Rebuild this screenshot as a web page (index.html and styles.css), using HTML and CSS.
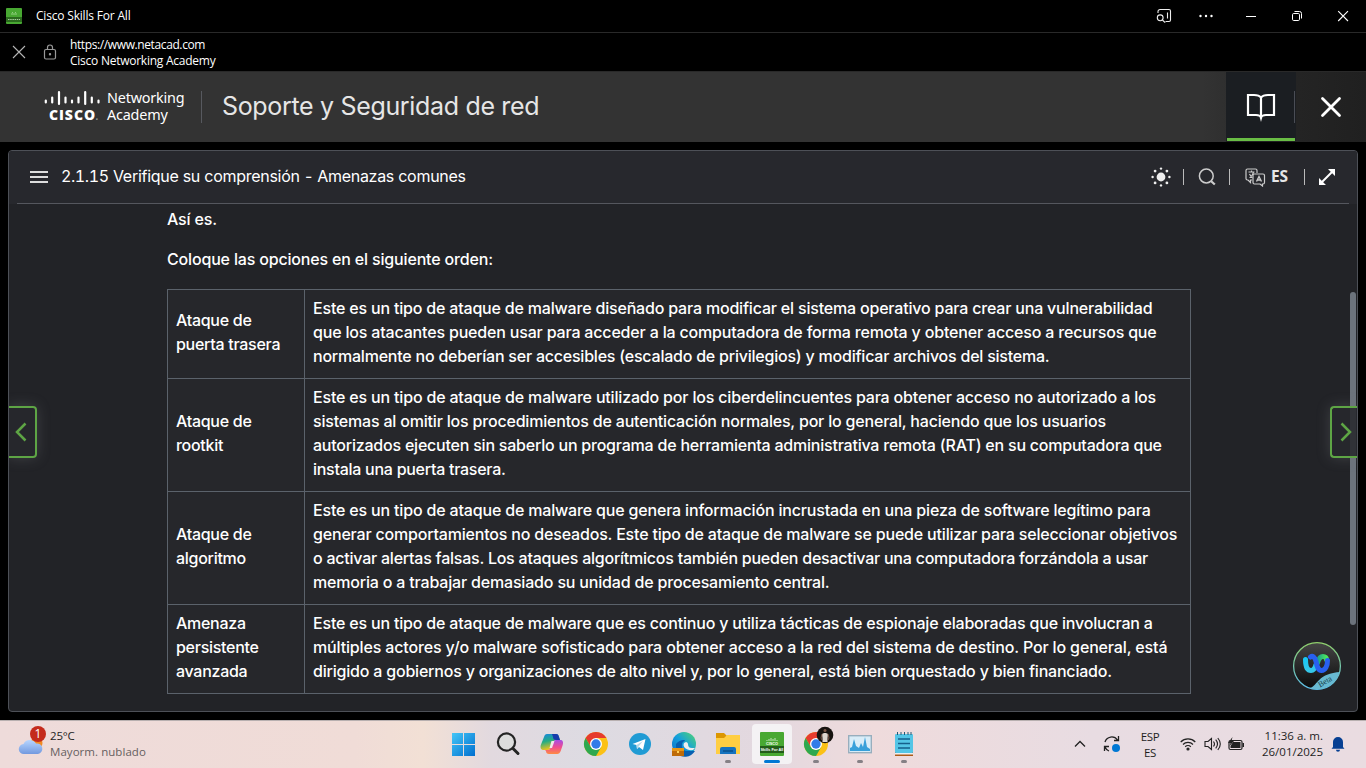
FILE: index.html
```html
<!DOCTYPE html>
<html lang="es">
<head>
<meta charset="utf-8">
<title>Cisco Skills For All</title>
<link rel="stylesheet" href="styles.css">
</head>
<body>
<header class="titlebar">
  <svg class="app-icon" width="16" height="16" viewBox="0 0 16 16"><rect width="16" height="16" rx="1" fill="#48a832"/><path d="M0 9h16v5H0z" fill="#2b6b1e"/><path d="M2 11.500h12" stroke="#a9cda0" stroke-dasharray="1.500 .7"/><path d="M5 6h6M6 4.500h1M9 4.500h1" stroke="#91ce81"/></svg>
  <span class="app-name">Cisco Skills For All</span>
  <div class="window-controls">
    <svg width="16" height="16" viewBox="0 0 16 16" fill="none" stroke="#eee" stroke-width="1.100"><path d="M2 5V3.500A2 2 0 0 1 4 1.500h9A1.500 1.500 0 0 1 14.500 3v9A1.500 1.500 0 0 1 13 13.500H9.500M11.500 4.500v6"/><circle cx="4.200" cy="9.800" r="2.900"/><path d="M6.400 12l2.800 2.700"/></svg>
    <svg width="16" height="16" viewBox="0 0 16 16" fill="#fff"><circle cx="2.500" cy="8" r="1.200"/><circle cx="8" cy="8" r="1.200"/><circle cx="13.500" cy="8" r="1.200"/></svg>
    <svg width="16" height="16" viewBox="0 0 16 16" stroke="#fff"><path d="M3 8.500h10"/></svg>
    <svg width="16" height="16" viewBox="0 0 16 16" fill="none" stroke="#fff"><rect x="3.500" y="5.500" width="7" height="7" rx="1.200"/><path d="M5.500 3.500h5a2 2 0 0 1 2 2v5"/></svg>
    <svg width="16" height="16" viewBox="0 0 16 16" stroke="#fff" stroke-width="1.100"><path d="M3.200 3.200l9.800 9.800M13 3.200L3.200 13"/></svg>
  </div>
</header>
<div class="addressbar">
  <svg width="14" height="14" viewBox="0 0 14 14" stroke="#b5b5b5" stroke-width="1.100"><path d="M1 1l12 12M13 1L1 13"/></svg>
  <svg class="lock" width="14" height="16" viewBox="0 0 14 16" fill="none" stroke="#999" stroke-width="1.200"><rect x="1.500" y="5.500" width="11" height="9.500" rx="1.500"/><path d="M4.500 5.500V3.500a2.500 2.500 0 0 1 5 0v2"/><circle cx="7" cy="10.200" r=".6" fill="#bbb"/></svg>
  <div class="address"><div class="url">https://www.netacad.com</div><div class="site">Cisco Networking Academy</div></div>
</div>
<div class="course-header">
  <div class="brand">
    <div class="cisco">
      <svg width="56" height="16" viewBox="0 0 56 16" stroke="#fff" stroke-width="2.200" stroke-linecap="round"><path d="M1.800 9.500v2M8.200 6.500v5M15 1v12M21.500 6.500v5M28 9.500v2M34.500 6.500v5M41.200 1v12M47.800 6.500v5M54.500 9.500v2"/></svg>
      <div class="cisco-word">CISCO<i>.</i></div>
    </div>
    <div class="academy"><div>Networking</div><div>Academy</div></div>
  </div>
  <div class="course-title">Soporte y Seguridad de red</div>
  <div class="book-tab"><svg width="30" height="28" viewBox="0 0 30 28" fill="none" stroke="#fff" stroke-width="2.200"><path d="M15 4.500C13.500 2.500 11 2 8 2H2v20h8c3 0 4.500 1 5 2.800.5-1.800 2-2.800 5-2.800h8V2h-6c-3 0-5.500.5-7 2.500zM15 4v21.500"/></svg></div>
  <div class="close-tab"><svg width="22" height="22" viewBox="0 0 22 22" stroke="#fff" stroke-width="2.800" stroke-linecap="round"><path d="M2.500 2.500l17 17M19.500 2.500l-17 17"/></svg></div>
</div>
<main class="stage">
  <section class="panel">
    <div class="toolbar">
      <div class="toolbar-row">
      <div class="menu"><i></i><i></i><i></i></div>
      <h1><span class="section-number">2.1.15</span> Verifique su comprensión <span class="dash">-</span> Amenazas comunes</h1>
      <div class="tools">
        <svg width="20" height="20" viewBox="0 0 20 20" fill="#eee"><circle cx="10" cy="10" r="4.400"/><circle cx="10" cy="1.600" r="1.200"/><circle cx="10" cy="18.400" r="1.200"/><circle cx="1.600" cy="10" r="1.200"/><circle cx="18.400" cy="10" r="1.200"/><circle cx="4.100" cy="4.100" r="1.400"/><circle cx="15.900" cy="4.100" r="1.400"/><circle cx="4.100" cy="15.900" r="1.400"/><circle cx="15.900" cy="15.900" r="1.400"/></svg>
        <i class="sep sep-a"></i>
        <svg class="search" width="18" height="18" viewBox="0 0 18 18" fill="none" stroke="#ccc" stroke-width="1.500"><circle cx="8.300" cy="8" r="6.900"/><path d="M13.200 13.200l3.600 3.300" stroke-width="2.200"/></svg>
        <i class="sep sep-b"></i>
        <svg class="translate" width="21" height="19" viewBox="0 0 21 19" fill="none" stroke="#ccc" stroke-width="1.200"><path d="M7 12H5.500v2.500L3 12H2.500A1.500 1.500 0 0 1 1 10.500v-8A1.500 1.500 0 0 1 2.500 1h8A1.500 1.500 0 0 1 12 2.500V5"/><path d="M3.500 4h6M6.500 2.500V4M4.500 9.500c2-1 3.500-3 4-5.500M4.500 6c1 2 2 3 3 3.500"/><path d="M9 6h9a1.500 1.500 0 0 1 1.500 1.500v7A1.500 1.500 0 0 1 18 16h-.5v2L15 16H9.500A1.500 1.500 0 0 1 8 14.500V7.200A1.200 1.200 0 0 1 9 6z"/><path d="M11.500 13.500l2.500-5 2.500 5M12.500 12h3" stroke-width="1.400"/></svg>
        <b class="lang">ES</b>
        <i class="sep sep-c"></i>
        <svg class="expand" width="18" height="18" viewBox="0 0 18 18"><path d="M3.500 14.500l11-11" stroke="#fff" stroke-width="2"/><path d="M10 1h7v7zM1 10v7h7z" fill="#fff"/></svg>
      </div>
      </div>
    </div>
    <div class="content">
      <p class="feedback">Así es.</p>
      <p class="instruction">Coloque las opciones en el siguiente orden:</p>
      <table>
        <tr><th>Ataque de<br>puerta trasera</th><td><span class="l1">Este es un tipo de ataque de malware diseñado para modificar el sistema operativo para crear una vulnerabilidad</span><br><span class="l2">que los atacantes pueden usar para acceder a la computadora de forma remota y obtener acceso a recursos que</span><br><span class="l3">normalmente no deberían ser accesibles (escalado de privilegios) y modificar archivos del sistema.</span></td></tr>
        <tr><th>Ataque de<br>rootkit</th><td><span class="l4">Este es un tipo de ataque de malware utilizado por los ciberdelincuentes para obtener acceso no autorizado a los</span><br><span class="l5">sistemas al omitir los procedimientos de autenticación normales, por lo general, haciendo que los usuarios</span><br><span class="l6">autorizados ejecuten sin saberlo un programa de herramienta administrativa remota (RAT) en su computadora que</span><br><span class="l7">instala una puerta trasera.</span></td></tr>
        <tr><th>Ataque de<br>algoritmo</th><td><span class="l8">Este es un tipo de ataque de malware que genera información incrustada en una pieza de software legítimo para</span><br><span class="l9">generar comportamientos no deseados. Este tipo de ataque de malware se puede utilizar para seleccionar objetivos</span><br><span class="l10">o activar alertas falsas. Los ataques algorítmicos también pueden desactivar una computadora forzándola a usar</span><br><span class="l11">memoria o a trabajar demasiado su unidad de procesamiento central.</span></td></tr>
        <tr><th>Amenaza<br>persistente<br>avanzada</th><td><span class="l12">Este es un tipo de ataque de malware que es continuo y utiliza tácticas de espionaje elaboradas que involucran a</span><br><span class="l13">múltiples actores y/o malware sofisticado para obtener acceso a la red del sistema de destino. Por lo general, está</span><br><span class="l14">dirigido a gobiernos y organizaciones de alto nivel y, por lo general, está bien orquestado y bien financiado.</span></td></tr>
      </table>
    </div>
    <div class="scroll-thumb"></div>
    <div class="nav prev"><svg width="12" height="20" viewBox="0 0 12 20"><path d="M10.500 1.500L2 10l8.500 8.500"/></svg></div>
    <div class="nav next"><svg width="12" height="20" viewBox="0 0 12 20"><path d="M1.500 1.500L10 10l-8.500 8.500"/></svg></div>
    <svg class="assistant" width="48" height="48" viewBox="0 0 48 48">
      <defs>
        <linearGradient id="ring" x2="0" y2="1"><stop offset="0" stop-color="#8fcf6a"/><stop offset="1" stop-color="#5cbdea"/></linearGradient>
        <linearGradient id="disc" x2="0" y2="1"><stop offset="0" stop-color="#454545"/><stop offset="1" stop-color="#0b0b0b"/></linearGradient>
        <linearGradient id="wl" x2="0" y2="1"><stop offset="0" stop-color="#18c8f5"/><stop offset="1" stop-color="#35c7e8"/></linearGradient>
        <linearGradient id="wr" x2="1" y2="0"><stop offset="0" stop-color="#17a08e"/><stop offset="1" stop-color="#4de65c"/></linearGradient>
        <clipPath id="round"><circle cx="24" cy="24" r="23.500"/></clipPath>
      </defs>
      <circle cx="24" cy="24" r="23.400" fill="url(#disc)" stroke="url(#ring)" stroke-width="1.300"/>
      <g fill="none" stroke-width="5" stroke-linecap="round"><path d="M24.500 21c1-4 2.500-6.500 5.500-6.500 2.200 0 3.500 1.500 3.500 3" stroke="url(#wr)"/><path d="M12.500 17.500c0 7 2 11 5.500 11 2.500 0 4-2 5-6" stroke="url(#wl)"/><path d="M17.500 15c2-1.500 4.500 0 5.500 4.500 1 5 2 9 5.500 9 4 0 6-5 6-10" stroke="#2860f0"/></g>
      <g clip-path="url(#round)"><path d="M17 46C25 44 24 31 48 30v18H17z" fill="#68b9d1"/></g>
      <text class="beta" x="27" y="45.500" transform="rotate(-30 27 45.500)">Beta</text>
    </svg>
  </section>
</main>
<footer class="taskbar">
  <div class="weather">
    <svg width="30" height="32" viewBox="0 0 30 32"><defs><linearGradient id="cloud" x2="0" y2="1"><stop offset="0" stop-color="#b8d6ff"/><stop offset="1" stop-color="#7299df"/></linearGradient></defs><circle cx="18.500" cy="17" r="6" fill="#f18924"/><path d="M6 28a5 5 0 0 1-.5-10A7 7 0 0 1 18 17.500 5.300 5.300 0 0 1 20 28z" fill="url(#cloud)"/><circle cx="20" cy="8" r="8" fill="#c42b1c"/><text class="count" x="20" y="12.300" text-anchor="middle">1</text></svg>
    <div><div class="temp">25°C</div><div class="sky">Mayorm. nublado</div></div>
  </div>
  <div class="apps">
    <div class="app"><svg width="24" height="24" viewBox="0 0 24 24"><defs><linearGradient id="win" x2="1" y2="1"><stop stop-color="#44c6f7"/><stop offset="1" stop-color="#006fcf"/></linearGradient></defs><path d="M0 1h11v11H0zM12 1h11v11H12zM0 13h11v11H0zM12 13h11v11H12z" fill="url(#win)"/></svg></div>
    <div class="app"><svg width="24" height="24" viewBox="0 0 24 24" fill="#ddd" stroke="#242424"><circle cx="10.500" cy="10" r="8.600" stroke-width="2.200"/><path d="M17 16.500l5 5" stroke-width="3" stroke-linecap="round"/></svg></div>
    <div class="app"><svg width="24" height="24" viewBox="0 0 24 24"><defs><linearGradient id="cpa" x2=".3" y2="1"><stop stop-color="#1684e5"/><stop offset=".5" stop-color="#25ac83"/><stop offset="1" stop-color="#f1c21b"/></linearGradient><linearGradient id="cpb" x2="0" y2="1"><stop stop-color="#a54de6"/><stop offset=".5" stop-color="#ef4b91"/><stop offset="1" stop-color="#ff8b42"/></linearGradient></defs><path d="M7 2h9c2 0 2.500 1 3 3l1 3h-5L11 15c-.8 2-1.500 3-3.500 3H4c-3 0-4-2-3.200-5L4 5C4.500 3 5.500 2 7 2z" fill="url(#cpa)"/><path d="M12 2h4c2 0 2.500 1 3 3l1 3h-4c-2 0-3-1-3-3z" fill="#173cac"/><path d="M16 8h4c3 0 3.500 2 2.700 5l-2 6c-.8 2-1.800 3-3.500 3H9c-2 0-3-1-3-3l-1-1h2.500c2 0 2.700-1 3.500-3l2.500-5c.5-1.300 1-2 2.500-2z" fill="url(#cpb)"/><path d="M11.500 9h3L12 16H9.500z" fill="#efe7e9"/></svg></div>
    <div class="app"><svg width="24" height="24" viewBox="0 0 24 24"><circle cx="12" cy="12" r="12" fill="#fbc116"/><path d="M1.600 6A12 12 0 0 1 22.400 6H12L6.800 15z" fill="#e63b2e"/><path d="M1.600 6A12 12 0 0 0 12 24l5.200-9L12 18 6.800 15z" fill="#2da84f"/><circle cx="12" cy="12" r="6" fill="#fff"/><circle cx="12" cy="12" r="4.700" fill="#327be8"/></svg></div>
    <div class="app"><svg width="24" height="24" viewBox="0 0 24 24"><circle cx="12" cy="12" r="11" fill="#209bd4"/><path d="M4.500 12l13-5-2.500 11-4-3-2 2-.5-4z" fill="#fff"/><path d="M8.500 13l6.500-4-4 5-2 3z" fill="#b7d8e8"/></svg></div>
    <div class="app"><svg width="24" height="24" viewBox="0 0 24 24"><defs><linearGradient id="edge" y1="1" x2="1" y2="0"><stop stop-color="#0868c4"/><stop offset=".5" stop-color="#149fdd"/><stop offset="1" stop-color="#55d86b"/></linearGradient></defs><circle cx="12" cy="12" r="12" fill="url(#edge)"/><path d="M13 9c-5 1-4 10 2 10h8A12 12 0 0 1 4 21V12c3-4 9-5 9-3z" fill="#075fb0"/><path d="M14 10c4 1 0 6 6 6h3l-2 2c-6 1-11-3-9-7z" fill="#eee"/><path d="M0 16h12v8H0z" fill="#be6b09"/><path d="M0 16h12v3H0z" fill="#e59619"/><rect x="5" y="19" width="2" height="2" fill="#ffd35b"/></svg></div>
    <div class="app running"><svg width="24" height="24" viewBox="0 0 24 24"><path d="M0 1h8l3 3-2 3H0z" fill="#dc9600"/><path d="M0 6h8l3-3h13v19H0z" fill="#ffce42"/><path d="M4 22v-5q0-2 2-2h12q2 0 2 2v5z" fill="#1673bf"/><path d="M7 19h10" stroke="#0a508d" stroke-width="1.500"/></svg></div>
    <div class="app active"><svg width="24" height="24" viewBox="0 0 24 24"><rect width="24" height="24" rx="1" fill="#48a832"/><path d="M0 14h24v7H0z" fill="#235c1a"/><path d="M7 8v1M9 7v2M11 6v3M13 7v2M15 6v3M17 8v1" stroke="#c5e5be"/><text class="tiny" x="12" y="12.500" text-anchor="middle">CISCO</text><text class="tiny" x="12" y="19" text-anchor="middle">Skills For All</text></svg></div>
    <div class="app running"><svg class="chrome-profile" width="30" height="30" viewBox="0 -6 30 30"><circle cx="12" cy="12" r="12" fill="#fbc116"/><path d="M1.600 6A12 12 0 0 1 22.400 6H12L6.800 15z" fill="#e63b2e"/><path d="M1.600 6A12 12 0 0 0 12 24l5.200-9L12 18 6.800 15z" fill="#2da84f"/><circle cx="12" cy="12" r="6" fill="#fff"/><circle cx="12" cy="12" r="4.700" fill="#327be8"/><circle cx="21" cy="3" r="8.300" fill="#171310"/><path d="M18.500 10V6L18 2l2-1h2l2 1-.5 4v4z" fill="#ddd6cf"/><path d="M18 2l-1 4 1 2M24 2l1 4-1 2" fill="none" stroke="#7d5949"/><circle cx="21" cy="-1.500" r="1.500" fill="#7d5949"/></svg></div>
    <div class="app running"><svg width="24" height="24" viewBox="0 0 24 24"><rect x=".7" y="3.700" width="22.600" height="17" fill="#d9edf8" stroke="#98aebd" stroke-width="1.400"/><path d="M2 19v-3l2-1 2-8 2 7 3 2 2-5 2 4 2-10 2 10 3 2v2z" fill="#38a0da"/></svg></div>
    <div class="app running"><svg width="24" height="24" viewBox="0 0 24 24"><path d="M3 19h18v5H3z" fill="#ad5a17"/><rect x="3" y="2" width="18" height="19" rx="1" fill="#54c5e6"/><path d="M3 21h18v1.500H3z" fill="#eee"/><path d="M5.500 0v3M9 0v3M12.500 0v3M16 0v3M19 0v3" stroke="#245a75"/><path d="M6 7h12M6 11.500h12M6 16h12" stroke="#155f8b" stroke-width="1.500"/></svg></div>
  </div>
  <div class="tray">
    <svg class="chevron" width="12" height="8" viewBox="0 0 12 8" fill="none" stroke="#222" stroke-width="1.300"><path d="M1 6.500l5-5 5 5"/></svg>
    <svg class="sync" width="18" height="18" viewBox="0 0 18 18" fill="none" stroke="#222" stroke-width="1.300"><path d="M2 7a7 7 0 0 1 12.500-2M15.500 1v4.500H11M1.500 16v-4.500H6M2 12a7 7 0 0 0 4 4"/><circle cx="13" cy="13" r="4" fill="#0078d4" stroke="none"/></svg>
    <div class="keyboard"><div>ESP</div><div>ES</div></div>
    <svg class="wifi" width="16" height="14" viewBox="0 0 16 14" fill="none" stroke="#222" stroke-width="1.200"><path d="M.7 5a10.300 10.300 0 0 1 14.600 0M3 7.500a7 7 0 0 1 10 0M5.200 9.700a4 4 0 0 1 5.600 0"/><circle cx="8" cy="12" r="1" fill="#222"/></svg>
    <svg class="sound" width="17" height="14" viewBox="0 0 17 14" fill="none" stroke="#222" stroke-width="1.100"><path d="M1 4.500h3l3.500-3v11L4 9.500H1zM9.500 4.500q2 2.500 0 5M11.700 2.700q3.600 4.300 0 8.600M13.800 1q5 6 0 12"/></svg>
    <svg class="battery" width="17" height="14" viewBox="0 0 17 14"><rect x="1" y="3.500" width="13" height="9" rx="1.500" fill="none" stroke="#222" stroke-width="1.200"/><path d="M5 5h7.500v6h-10V9z" fill="#222"/><path d="M14.500 6H16v4h-1.500zM4.500 0L0 6h2.500L1.500 9 6 4H3.500z" fill="#222"/></svg>
    <div class="clock"><div class="time">11:36 a. m.</div><div class="date">26/01/2025</div></div>
    <svg class="bell" width="14" height="16" viewBox="0 0 14 16" fill="#063f92"><path d="M2 11V6a5 5 0 0 1 10 0v5l1.500 1.700H.500zM5 13.700h4a2 2 0 0 1-4 0z"/></svg>
  </div>
</footer>
</body>
</html>
```
FILE: styles.css
```css
* { box-sizing: border-box; }
body { margin: 0; width: 1366px; height: 768px; overflow: hidden; background: #000; color: #fff; font-family: Inter, "Liberation Sans", sans-serif; display: flex; flex-direction: column; }
svg { display: block; flex: none; overflow: visible; }

.titlebar { height: 33px; flex: none; border-bottom: 1px solid #292929; display: flex; align-items: center; padding-left: 6px; font: 12px "Open Sans", sans-serif; }
.app-name { margin-left: 14px; letter-spacing: -.19px; padding-bottom: 1px; }
.window-controls { margin-left: auto; display: flex; padding-right: 15px; }
.window-controls svg { margin-left: 30px; }
.window-controls svg:nth-child(2) { margin-left: 26px; }
.window-controls svg:nth-child(3) { margin-left: 29px; }
.addressbar { height: 39px; flex: none; border-bottom: 1px solid #292929; display: flex; align-items: center; padding-left: 12px; font: 12px/16px "Open Sans", sans-serif; }
.lock { margin-left: 17px; }
.address { margin-left: 13px; padding-top: 2px; white-space: nowrap; }
.url { letter-spacing: -.39px; }
.site { letter-spacing: -.25px; }

.course-header { height: 70px; flex: none; display: flex; align-items: center; background: linear-gradient(90deg, #333 0 88%, #242424 95%, #202020); }
.brand { display: flex; height: 32px; width: 202px; padding-left: 44px; border-right: 1px solid #57595f; }
.cisco { width: 56px; }
.cisco-word { font: 800 14px/16px "Open Sans", sans-serif; letter-spacing: .95px; padding-left: 5px; white-space: nowrap; }
.cisco-word i { font-size: 8px; color: #999; }
.academy { margin-left: 7px; font: 14.400px/16.500px "Noto Sans", sans-serif; letter-spacing: -.2px; margin-top: -2px; }
.academy div { height: 17px; line-height: 17px; }
.course-title { margin-left: 20px; font-size: 25px; font-weight: 400; white-space: nowrap; color: #e6e6e6; letter-spacing: -.33px; padding-bottom: 2px; }
.book-tab { margin-left: auto; width: 70px; height: 70px; padding-bottom: 1px; background: #1b1e22; box-shadow: inset 0 -1px #202020; display: flex; align-items: center; justify-content: center; position: relative; }
.book-tab::before { content: ""; position: absolute; left: 1px; right: 1px; bottom: 1px; height: 3px; background: #69bd45; }
.book-tab::after { content: ""; position: absolute; right: 1px; top: 19px; width: 1px; height: 32px; background: #4a4d55; }
.close-tab { width: 70px; display: flex; justify-content: center; }

.stage { height: 578px; flex: none; padding: 8px; }
.panel { height: 562px; position: relative; border: 1px solid #4d5057; border-radius: 4px; background: #222327; overflow: hidden; }
.toolbar { height: 53px; padding: 0 8px; background: #27282d; }
.toolbar-row { height: 53px; border-bottom: 1px solid #55575e; display: flex; align-items: center; }
.menu { width: 18px; height: 12px; margin-left: 13px; display: flex; flex-direction: column; justify-content: space-between; }
.menu i { height: 2px; background: #ddd; }
h1 { margin: -2px 0 0 13px; font-size: 16px; line-height: 24px; font-weight: 400; white-space: nowrap; letter-spacing: -.28px; }
.section-number { font-variant-numeric: tabular-nums; letter-spacing: -.4px; }
.dash { padding: 0 1px; }
.tools { display: flex; align-items: center; margin-left: auto; padding-right: 13px; height: 26px; }
.sep { width: 1px; height: 16px; background: #bbb; }
.sep-a { margin-left: 12px; }
.search { margin-left: 14px; }
.sep-b { margin-left: 13px; }
.translate { margin-left: 15px; }
.lang { margin-left: 5px; width: 19px; margin-top: -2px; font: 700 15.500px/18px "Noto Sans", sans-serif; letter-spacing: -.2px; color: #e6e6e6; }
.sep-c { margin-left: 14px; }
.expand { margin-left: 13px; }

.content { padding: 3px 0 0 158px; font-size: 16px; line-height: 24px; font-weight: 500; white-space: nowrap; letter-spacing: -.17px; }
.content p { margin: 0; height: 40px; }
.content .instruction { height: 42px; }
table { border-collapse: collapse; width: 1024px; table-layout: fixed; background: #26272b; }
th, td { border: 1px solid #5b626b; padding: 6px 8px 10px; vertical-align: middle; text-align: left; font-weight: 500; }
th { width: 137px; letter-spacing: -.28px; }
.l1 { letter-spacing: -.190px; }
.l2 { letter-spacing: -.178px; }
.l3 { letter-spacing: -.224px; }
.l4 { letter-spacing: -.179px; }
.l5 { letter-spacing: -.191px; }
.l6 { letter-spacing: -.220px; }
.l7 { letter-spacing: -.270px; }
.l8 { letter-spacing: -.175px; }
.l9 { letter-spacing: -.187px; }
.l10 { letter-spacing: -.236px; }
.l11 { letter-spacing: -.182px; }
.l12 { letter-spacing: -.187px; }
.l13 { letter-spacing: -.145px; }
.l14 { letter-spacing: -.204px; }
.scroll-thumb { position: absolute; width: 6px; height: 333px; right: 1px; top: 141px; border-radius: 3px; background: #6c737c; }
.nav { position: absolute; top: 255px; height: 52px; width: 29px; border: 2px solid #5ea545; background: #27282ddd; display: flex; align-items: center; box-shadow: 0 0 14px #777a8055; }
.nav svg { fill: none; stroke: #5ea545; stroke-width: 2.500; }
.prev { left: -1px; border-left: 0; border-radius: 0 4px 4px 0; padding-left: 7px; }
.next { right: -2px; border-right: 0; border-radius: 4px 0 0 4px; padding-left: 8px; }
.assistant { position: absolute; right: 16px; top: 491px; }
.beta { font: 8px "Liberation Serif", serif; fill: #173e49; }

.taskbar { height: 48px; flex: none; position: relative; display: flex; justify-content: space-between; border-top: 1px solid #b8b0b0; background: linear-gradient(90deg, #eedbda, #f0dcd7 26%, #f2e0d5 31%, #e2d9df 36%, #dddbe2 43%, #e3d8df 56%, #efdbdc 64%, #e8dce2 80%, #eadce1); color: #1e1e1e; font: 11.500px/16px "Open Sans", sans-serif; }
.weather { display: flex; padding: 5px 0 0 18px; width: 440px; }
.weather > div { margin-left: 2px; padding-top: 2px; white-space: nowrap; }
.sky { color: #66605f; letter-spacing: .05px; }
.temp { letter-spacing: -.2px; }
.count { font: 12px "Open Sans", sans-serif; fill: #fff; }
.apps { position: absolute; left: 444px; top: 3px; display: flex; gap: 4px; }
.app { width: 40px; height: 40px; display: flex; justify-content: center; align-items: center; border-radius: 4px; position: relative; }
.running::after, .active::after { content: ""; position: absolute; bottom: 1px; left: 17px; width: 6px; height: 3px; border-radius: 2px; background: #858085; }
.active { background: #f4f2f4; }
.active::after { left: 12px; width: 16px; background: #0078d4; }
.chrome-profile { margin: -6px 0 0 6px; }
.tiny { font: 700 3.800px "Liberation Sans", sans-serif; fill: #fff; }
.tray { display: flex; align-items: center; padding-right: 21px; }
.chevron { margin-top: -1px; }
.sync { margin-left: 17px; margin-top: -1px; }
.keyboard { width: 24px; margin-left: 17px; text-align: center; letter-spacing: -.3px; }
.wifi { margin-left: 18px; margin-top: -2px; }
.sound { margin-left: 8px; margin-top: -2px; }
.battery { margin-left: 7px; margin-top: -2px; }
.clock { margin-left: 15px; width: 63px; text-align: right; white-space: nowrap; margin-top: -1px; }
.bell { margin-left: 8px; margin-top: -2px; }
```
